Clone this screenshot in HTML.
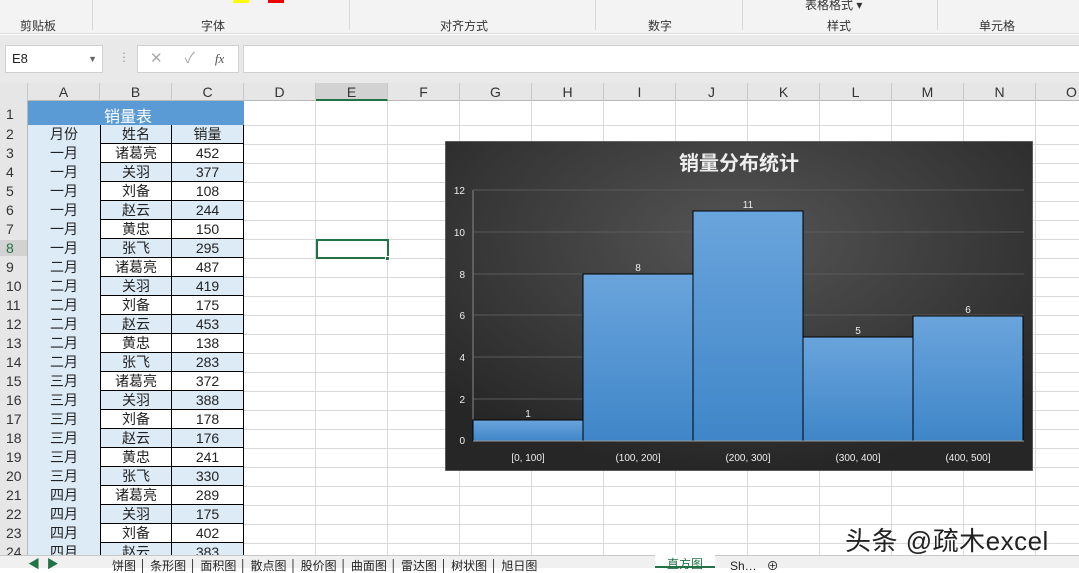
<!DOCTYPE html>
<html><head><meta charset="utf-8"><style>
*{margin:0;padding:0;box-sizing:border-box}
body{width:1079px;height:568px;overflow:hidden;background:#fff;font-family:"Liberation Sans","Noto Sans CJK SC",sans-serif;position:relative;color:#222}
.a{position:absolute}
.rib{left:0;top:0;width:1079px;height:34px;background:#f3f3f3;border-bottom:1px solid #dadada}
.gl{top:17px;font-size:12px;color:#333}
.sep{top:0;width:1px;height:30px;background:#d8d8d8}
.fb{left:0;top:35px;width:1079px;height:48px;background:#e9e9e9}
.box{background:#fff;border:1px solid #d0d0d0}
.colh{left:0;top:83px;width:1079px;height:18px;background:#e6e6e6;border-bottom:1px solid #b8b8b8}
.ch{top:83px;height:18px;width:72px;text-align:center;font-size:14px;line-height:19px;color:#333;border-right:1px solid #c8c8c8}
.rowh{left:0;top:101px;width:28px;height:454px;background:#e6e6e6;border-right:1px solid #b8b8b8}
.grid{left:28px;top:101px;width:1051px;height:454px;
background-image:repeating-linear-gradient(to right,transparent 0 71px,#d9d9d9 71px 72px),repeating-linear-gradient(to bottom,transparent 0 18px,#d9d9d9 18px 19px);background-position:0 6px}
.rn{left:0;width:27px;text-align:left;padding-left:6px;font-size:14px;color:#333}
.c{height:19px;width:72px;text-align:center;font-size:14px;line-height:19px;color:#222}
.tabs{left:0;top:555px;width:1079px;height:13px;background:#f0f0f0;border-top:1px solid #c8c8c8;font-size:12px;color:#333}
.tab{top:2px;font-size:12px;line-height:14px}
</style></head><body>
<div class="a rib"></div>
<div class="a gl" style="left:20px">剪贴板</div>
<div class="a gl" style="left:201px">字体</div>
<div class="a gl" style="left:440px">对齐方式</div>
<div class="a gl" style="left:648px">数字</div>
<div class="a gl" style="left:827px">样式</div>
<div class="a gl" style="left:979px">单元格</div>
<div class="a gl" style="left:805px;top:-4px">表格格式 ▾</div>
<div class="a" style="left:233px;top:0;width:16px;height:3px;background:#ffff00"></div>
<div class="a" style="left:268px;top:0;width:16px;height:3px;background:#e00"></div>
<div class="a sep" style="left:92px"></div><div class="a sep" style="left:349px"></div>
<div class="a sep" style="left:595px"></div><div class="a sep" style="left:742px"></div>
<div class="a sep" style="left:937px"></div>
<div class="a fb"></div>
<div class="a box" style="left:5px;top:45px;width:98px;height:28px;font-size:13px;line-height:26px;padding-left:6px">E8<span style="position:absolute;right:5px;font-size:9px;color:#666">▼</span></div>
<div class="a" style="left:118px;top:50px;color:#999;font-size:12px">⋮</div>
<div class="a box" style="left:137px;top:45px;width:102px;height:28px;font-size:15px;line-height:26px;color:#aaa"><span style="margin-left:12px">✕</span><span style="margin-left:22px">✓</span><span style="margin-left:20px;font-style:italic;font-family:'Liberation Serif',serif;color:#555;font-size:13px">fx</span></div>
<div class="a box" style="left:243px;top:45px;width:840px;height:28px"></div>
<div class="a colh"></div>
<div class="a" style="left:0;top:83px;width:28px;height:18px;background:#e6e6e6;border-right:1px solid #c8c8c8"></div>
<div class="a ch" style="left:28px">A</div><div class="a ch" style="left:100px">B</div><div class="a ch" style="left:172px">C</div><div class="a ch" style="left:244px">D</div><div class="a ch" style="left:316px;background:#d2d2d2;border-bottom:2px solid #217346">E</div><div class="a ch" style="left:388px">F</div><div class="a ch" style="left:460px">G</div><div class="a ch" style="left:532px">H</div><div class="a ch" style="left:604px">I</div><div class="a ch" style="left:676px">J</div><div class="a ch" style="left:748px">K</div><div class="a ch" style="left:820px">L</div><div class="a ch" style="left:892px">M</div><div class="a ch" style="left:964px">N</div><div class="a ch" style="left:1036px">O</div>
<div class="a grid"></div>
<div class="a rowh"></div>
<div class="a" style="left:28px;top:101px;width:216px;height:24px;background:#5b9bd5"></div>
<div class="a" style="left:104px;top:103px;color:#fff;font-size:16px">销量表</div>
<div class="a" style="left:316px;top:239px;width:73px;height:20px;border:2px solid #217346"></div>
<div class="a" style="left:385px;top:256px;width:5px;height:5px;background:#217346;border:1px solid #fff"></div>
<div id="rows"></div>
<script>
var d=[["月份","姓名","销量"],["一月","诸葛亮",452],["一月","关羽",377],["一月","刘备",108],["一月","赵云",244],["一月","黄忠",150],["一月","张飞",295],["二月","诸葛亮",487],["二月","关羽",419],["二月","刘备",175],["二月","赵云",453],["二月","黄忠",138],["二月","张飞",283],["三月","诸葛亮",372],["三月","关羽",388],["三月","刘备",178],["三月","赵云",176],["三月","黄忠",241],["三月","张飞",330],["四月","诸葛亮",289],["四月","关羽",175],["四月","刘备",402],["四月","赵云",383]];
var h='<div class="a rn" style="top:106px">1</div>';
for(var i=0;i<d.length;i++){var r=i+2,t=125+i*19;var bl=(r%2==0)?'#ddebf7':'#fff';
h+='<div class="a rn" style="top:'+(t+1)+'px;'+(r==8?'background:#d2d2d2;color:#217346':'')+'">'+r+'</div>';
h+='<div class="a c" style="left:28px;top:'+t+'px;background:#ddebf7">'+d[i][0]+'</div>';
h+='<div class="a c" style="left:100px;top:'+t+'px;background:'+bl+';border:1px solid #000;border-top:none">'+d[i][1]+'</div>';
h+='<div class="a c" style="left:172px;top:'+t+'px;background:'+bl+';border-bottom:1px solid #000;border-right:1px solid #000">'+d[i][2]+'</div>';}
document.getElementById('rows').innerHTML=h;
</script>
<svg class="a" style="left:445px;top:141px" width="588" height="330" font-family="Liberation Sans, Noto Sans CJK SC, sans-serif">
<defs><radialGradient id="bg" cx="50%" cy="30%" r="70%"><stop offset="0" stop-color="#555"/><stop offset="1" stop-color="#262626"/></radialGradient>
<linearGradient id="bar" x1="0" y1="0" x2="0" y2="1"><stop offset="0" stop-color="#6aa4dc"/><stop offset="1" stop-color="#3f86c8"/></linearGradient></defs>
<rect width="588" height="330" fill="url(#bg)" stroke="#888"/>
<text x="294" y="29" text-anchor="middle" fill="#eee" font-size="20" font-weight="bold">销量分布统计</text>
<g stroke="#5a5a5a" stroke-width="1"><line x1="28" x2="579" y1="49" y2="49"/><line x1="28" x2="579" y1="91" y2="91"/><line x1="28" x2="579" y1="133" y2="133"/><line x1="28" x2="579" y1="174" y2="174"/><line x1="28" x2="579" y1="216" y2="216"/><line x1="28" x2="579" y1="258" y2="258"/></g>
<line x1="28" x2="28" y1="49" y2="300" stroke="#888"/>
<g fill="#eee" font-size="10" text-anchor="end"><text x="20" y="53">12</text><text x="20" y="95">10</text><text x="20" y="137">8</text><text x="20" y="178">6</text><text x="20" y="220">4</text><text x="20" y="262">2</text><text x="20" y="303">0</text></g>
<g fill="url(#bar)" stroke="#000" stroke-width="1"><rect x="28" y="279" width="110" height="21"/><rect x="138" y="133" width="110" height="167"/><rect x="248" y="70" width="110" height="230"/><rect x="358" y="196" width="110" height="104"/><rect x="468" y="175" width="110" height="125"/></g>
<line x1="28" x2="579" y1="300" y2="300" stroke="#999"/>
<g fill="#eee" font-size="10" text-anchor="middle"><text x="83" y="276">1</text><text x="193" y="130">8</text><text x="303" y="67">11</text><text x="413" y="193">5</text><text x="523" y="172">6</text>
<text x="83" y="320">[0, 100]</text><text x="193" y="320">(100, 200]</text><text x="303" y="320">(200, 300]</text><text x="413" y="320">(300, 400]</text><text x="523" y="320">(400, 500]</text></g>
</svg>
<div class="a" style="left:845px;top:521px;font-size:26px;letter-spacing:0.5px;color:#222;text-shadow:0 0 2px #fff,0 0 2px #fff">头条 @疏木excel</div>
<div class="a tabs"></div>
<div class="a tab" style="left:28px;top:557px;color:#217346">◀ &nbsp;▶</div>
<div class="a tab" style="left:112px;top:559px">饼图 │ 条形图 │ 面积图 │ 散点图 │ 股价图 │ 曲面图 │ 雷达图 │ 树状图 │ 旭日图</div>
<div class="a" style="left:655px;top:555px;width:60px;height:13px;background:#fff;border-bottom:2px solid #217346;color:#217346;font-size:12px;text-align:center;line-height:18px">直方图</div>
<div class="a tab" style="left:730px;top:559px">Sh… &nbsp; ⊕</div>
</body></html>
